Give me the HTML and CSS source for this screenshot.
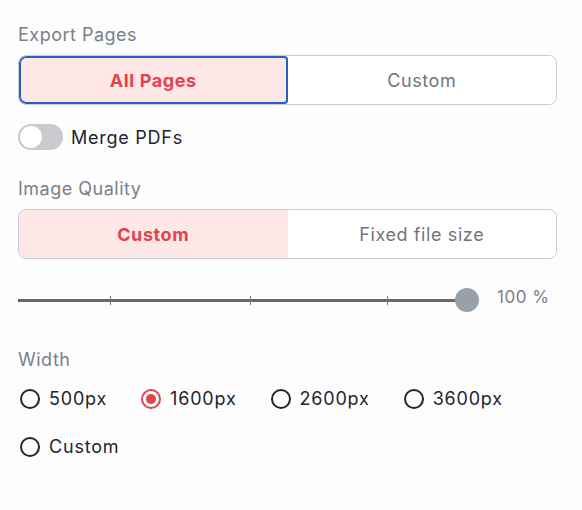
FILE: index.html
```html
<!DOCTYPE html>
<html lang="en">
<head>
  <meta charset="UTF-8" />
  <meta name="viewport" content="width=device-width, initial-scale=1.0" />
  <title>Export PDF</title>
  <link rel="stylesheet" href="styles.css">
</head>
<body>
  <div class="panel">
    <div class="label">Export Pages</div>
    <div class="segmented">
      <button class="seg active focus">All Pages</button>
      <button class="seg">Custom</button>
    </div>

    <label class="toggle-row">
      <span class="toggle"><span class="knob"></span></span>
      <span>Merge PDFs</span>
    </label>

    <div class="label">Image Quality</div>
    <div class="segmented">
      <button class="seg active">Custom</button>
      <button class="seg">Fixed file size</button>
    </div>

    <div class="slider-row">
      <div class="slider">
        <div class="track"></div>
        <span class="tick" style="left: 20%"></span>
        <span class="tick" style="left: 50.3%"></span>
        <span class="tick" style="left: 80%"></span>
        <span class="thumb"></span>
      </div>
      <span class="value">100 %</span>
    </div>

    <div class="label">Width</div>
    <div class="radios">
      <label class="radio"><span class="dot"></span>500px</label>
      <label class="radio checked"><span class="dot"></span>1600px</label>
      <label class="radio"><span class="dot"></span>2600px</label>
      <label class="radio"><span class="dot"></span>3600px</label>
      <label class="radio"><span class="dot"></span>Custom</label>
    </div>
  </div>
</body>
</html>
```

FILE: styles.css
```css
body {
  font-family: 'Inter', 'Noto Sans', sans-serif;
  margin: 0;
  padding: 0;
  background: #fdfdfd;
  color: #1f2430;
  letter-spacing: 0.5px;
}
.panel {
  width: 539px;
  padding: 24px 0 0 18px;
}
.label {
  font-size: 18px;
  line-height: 22px;
  color: #7b7f88;
  margin-bottom: 9px;
}
.segmented {
  display: flex;
  height: 50px;
  border: 1px solid #c9cbd0;
  border-radius: 8px;
  overflow: hidden;
  box-sizing: border-box;
}
.seg {
  flex: 1;
  border: none;
  background: #fff;
  font-family: inherit;
  letter-spacing: 0.6px;
  font-size: 18px;
  color: #71757e;
  padding: 0;
  margin: 0;
}
.seg.active {
  background: #fde7e7;
  color: #e3434b;
  font-weight: 700;
}
.seg.focus {
  box-shadow: inset 0 0 0 2px #1f63c6;
  border-radius: 7px 4px 4px 7px;
}
.toggle-row {
  display: flex;
  align-items: center;
  gap: 8px;
  font-size: 18px;
  letter-spacing: 0.75px;
  margin: 19px 0 28px;
}
.toggle {
  width: 45px;
  height: 26px;
  border-radius: 13px;
  background: #c8cad0;
  display: flex;
  align-items: center;
  padding: 0 2px;
  box-sizing: border-box;
}
.knob {
  width: 22px;
  height: 22px;
  border-radius: 50%;
  background: #fff;
}
.slider-row {
  display: flex;
  align-items: center;
  gap: 18px;
  margin: 28px 0 36px;
  height: 26px;
}
.slider {
  position: relative;
  width: 461px;
  height: 26px;
}
.track {
  position: absolute;
  left: 0;
  right: 12px;
  top: 12px;
  height: 3px;
  background: #666769;
}
.tick {
  position: absolute;
  top: 9px;
  width: 1px;
  height: 9px;
  background: #777;
}
.thumb {
  position: absolute;
  right: 0;
  top: 1px;
  width: 24px;
  height: 24px;
  border-radius: 50%;
  background: #9aa0ab;
}
.value {
  font-size: 17px;
  color: #7b7f88;
  margin-top: -6px;
}
.radios {
  display: flex;
  flex-wrap: wrap;
  column-gap: 34px;
  row-gap: 24px;
  margin-top: 16px;
  padding-left: 2px;
}
.radio {
  display: flex;
  align-items: center;
  gap: 9px;
  font-size: 18px;
  line-height: 24px;
  letter-spacing: 0.8px;
}
.dot {
  width: 20px;
  height: 20px;
  border: 2px solid #1f2430;
  border-radius: 50%;
  box-sizing: border-box;
  position: relative;
}
.radio.checked .dot {
  border-color: #e3434b;
}
.radio.checked .dot::after {
  content: "";
  position: absolute;
  left: 3px;
  top: 3px;
  width: 10px;
  height: 10px;
  border-radius: 50%;
  background: #e3434b;
}
.radio:last-child {
  flex-basis: 100%;
}
```
